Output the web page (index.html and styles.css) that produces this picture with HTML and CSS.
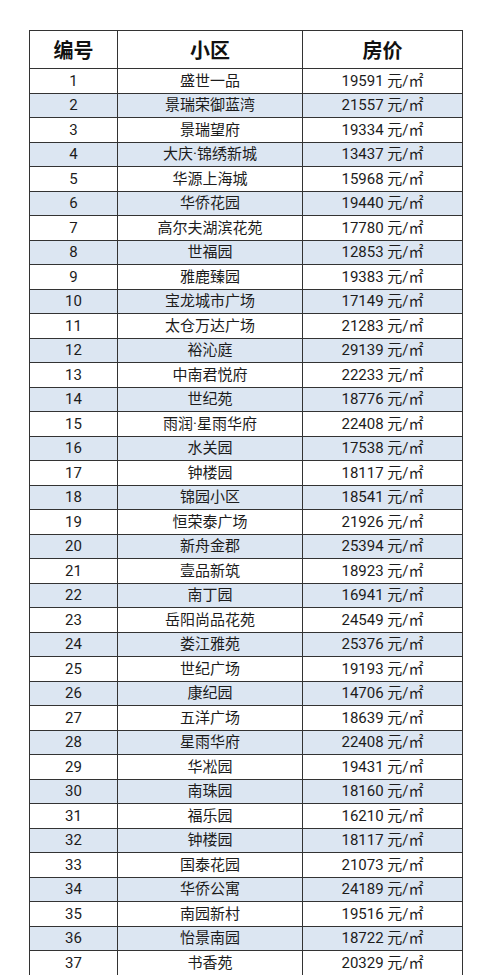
FILE: index.html
```html
<!DOCTYPE html>
<html lang="zh">
<head>
<meta charset="utf-8">
<link rel="stylesheet" href="styles.css">
</head>
<body>
<table class="price-table">
<thead>
<tr><th class="c-no">编号</th><th class="c-name">小区</th><th class="c-price">房价</th></tr>
</thead>
<tbody>
<tr><td>1</td><td>盛世一品</td><td>19591 元/㎡</td></tr>
<tr class="alt"><td>2</td><td>景瑞荣御蓝湾</td><td>21557 元/㎡</td></tr>
<tr><td>3</td><td>景瑞望府</td><td>19334 元/㎡</td></tr>
<tr class="alt"><td>4</td><td>大庆·锦绣新城</td><td>13437 元/㎡</td></tr>
<tr><td>5</td><td>华源上海城</td><td>15968 元/㎡</td></tr>
<tr class="alt"><td>6</td><td>华侨花园</td><td>19440 元/㎡</td></tr>
<tr><td>7</td><td>高尔夫湖滨花苑</td><td>17780 元/㎡</td></tr>
<tr class="alt"><td>8</td><td>世福园</td><td>12853 元/㎡</td></tr>
<tr><td>9</td><td>雅鹿臻园</td><td>19383 元/㎡</td></tr>
<tr class="alt"><td>10</td><td>宝龙城市广场</td><td>17149 元/㎡</td></tr>
<tr><td>11</td><td>太仓万达广场</td><td>21283 元/㎡</td></tr>
<tr class="alt"><td>12</td><td>裕沁庭</td><td>29139 元/㎡</td></tr>
<tr><td>13</td><td>中南君悦府</td><td>22233 元/㎡</td></tr>
<tr class="alt"><td>14</td><td>世纪苑</td><td>18776 元/㎡</td></tr>
<tr><td>15</td><td>雨润·星雨华府</td><td>22408 元/㎡</td></tr>
<tr class="alt"><td>16</td><td>水关园</td><td>17538 元/㎡</td></tr>
<tr><td>17</td><td>钟楼园</td><td>18117 元/㎡</td></tr>
<tr class="alt"><td>18</td><td>锦园小区</td><td>18541 元/㎡</td></tr>
<tr><td>19</td><td>恒荣泰广场</td><td>21926 元/㎡</td></tr>
<tr class="alt"><td>20</td><td>新舟金郡</td><td>25394 元/㎡</td></tr>
<tr><td>21</td><td>壹品新筑</td><td>18923 元/㎡</td></tr>
<tr class="alt"><td>22</td><td>南丁园</td><td>16941 元/㎡</td></tr>
<tr><td>23</td><td>岳阳尚品花苑</td><td>24549 元/㎡</td></tr>
<tr class="alt"><td>24</td><td>娄江雅苑</td><td>25376 元/㎡</td></tr>
<tr><td>25</td><td>世纪广场</td><td>19193 元/㎡</td></tr>
<tr class="alt"><td>26</td><td>康纪园</td><td>14706 元/㎡</td></tr>
<tr><td>27</td><td>五洋广场</td><td>18639 元/㎡</td></tr>
<tr class="alt"><td>28</td><td>星雨华府</td><td>22408 元/㎡</td></tr>
<tr><td>29</td><td>华凇园</td><td>19431 元/㎡</td></tr>
<tr class="alt"><td>30</td><td>南珠园</td><td>18160 元/㎡</td></tr>
<tr><td>31</td><td>福乐园</td><td>16210 元/㎡</td></tr>
<tr class="alt"><td>32</td><td>钟楼园</td><td>18117 元/㎡</td></tr>
<tr><td>33</td><td>国泰花园</td><td>21073 元/㎡</td></tr>
<tr class="alt"><td>34</td><td>华侨公寓</td><td>24189 元/㎡</td></tr>
<tr><td>35</td><td>南园新村</td><td>19516 元/㎡</td></tr>
<tr class="alt"><td>36</td><td>怡景南园</td><td>18722 元/㎡</td></tr>
<tr><td>37</td><td>书香苑</td><td>20329 元/㎡</td></tr>
</tbody>
</table>
</body>
</html>
```
FILE: styles.css
```css
html, body {
  margin: 0;
  padding: 0;
  background: #ffffff;
}

body {
  font-family: "Roboto", "Noto Sans CJK SC", sans-serif;
  color: #1c1c1c;
  padding: 30px 0 0 29px;
}

.price-table {
  border-collapse: collapse;
  table-layout: fixed;
  width: 433px;
}

.price-table th,
.price-table td {
  border: 1px solid #333333;
  text-align: center;
  padding: 0;
  white-space: nowrap;
}

.price-table th {
  height: 37px;
  font-size: 20px;
  font-weight: 700;
  font-family: "Noto Sans CJK SC", sans-serif;
  color: #111111;
}

.c-no { width: 87px; }
.c-name { width: 184px; }
.c-price { width: 159px; }

.price-table td {
  height: 23.5px;
  font-size: 15px;
  line-height: 18px;
}

.price-table tr.alt td {
  background: #dce6f2;
}
```
